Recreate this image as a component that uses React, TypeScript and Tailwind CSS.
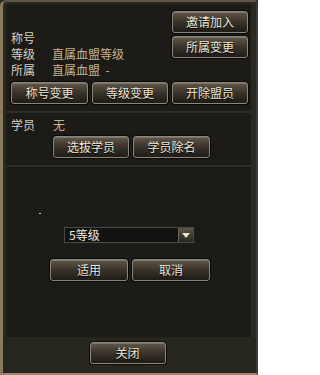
import type { ReactNode } from 'react';

// Game-style dark button with bevelled gradient
function Btn({ children, className = '' }: { children: ReactNode; className?: string }) {
  return (
    <button
      className={`h-[22px] rounded-[3px] border border-[#8a857a] bg-linear-to-b from-[#62574a] via-[#3a3329] to-[#1f1b15] text-[12px] leading-none text-[#eee8da] [text-shadow:0_1px_1px_#000] shadow-[inset_0_1px_0_rgba(255,255,255,0.18),0_0_0_1px_#0b0a08] flex items-center justify-center ${className}`}
    >
      {children}
    </button>
  );
}

export default function App() {
  return (
    <div className="w-[258px] h-[375px] overflow-hidden bg-[#2a2922] font-['Noto_Sans_CJK_SC','Liberation_Sans',sans-serif]">
      <div className="h-full flex flex-col border-l-[3px] border-t-2 border-b-2 border-r-2 border-l-[#8c7b5c] border-t-[#5f5747] border-b-[#9a8a6a] border-r-[#3c3a32] rounded-tl-[6px] rounded-tr-[4px]">
        {/* main dark panel */}
        <div className="ml-[3px] mr-[5px] mt-[2px] h-[333px] flex flex-col bg-[#1c1b18] rounded-tl-[4px]">
          {/* member info section */}
          <div className="h-[107px] pt-[7px] pl-[5px] pr-[3px]">
            <div className="flex">
              <div className="flex-1 pt-[19px] text-[12px] leading-[16px] text-[#d6d2c8]">
                <div>称号</div>
                <div className="flex">
                  <span className="w-[41px]">等级</span>
                  <span className="text-[#c9b18b]">直属血盟等级</span>
                </div>
                <div className="flex">
                  <span className="w-[41px]">所属</span>
                  <span className="text-[#c9b18b]">直属血盟&nbsp;&nbsp;-</span>
                </div>
              </div>
              <div className="flex flex-col gap-[3px]">
                <Btn className="w-[76px]">邀请加入</Btn>
                <Btn className="w-[76px]">所属变更</Btn>
              </div>
            </div>
            <div className="mt-[4px] flex gap-[4px]">
              <Btn className="w-[77px]">称号变更</Btn>
              <Btn className="w-[76px]">等级变更</Btn>
              <Btn className="w-[76px]">开除盟员</Btn>
            </div>
          </div>
          <div className="h-[2px] bg-[#2f2d26]" />

          {/* trainee section */}
          <div className="h-[52px] pt-[4px] pl-[5px]">
            <div className="flex text-[12px] leading-[16px]">
              <span className="w-[42px] text-[#d6d2c8]">学员</span>
              <span className="text-[#c9b18b]">无</span>
            </div>
            <div className="mt-[3px] ml-[42px] flex gap-[4px]">
              <Btn className="w-[76px]">选拔学员</Btn>
              <Btn className="w-[77px]">学员除名</Btn>
            </div>
          </div>
          <div className="h-[2px] bg-[#2c2a24]" />

          {/* level setting section */}
          <div className="flex-1 bg-[#1b1b18]">
            <div className="pt-[46px] pl-[33px] h-[60px]">
              <div className="w-[2px] h-[1px] bg-[#d6d2c8]" />
            </div>
            <div className="ml-[58px] w-[130px] h-[16px] flex border border-[#4b4a46] bg-[#121211]">
              <span className="flex-1 pl-[4px] text-[12px] leading-[14px] text-[#eeeae0]">5等级</span>
              <span className="w-[15px] h-full bg-linear-to-b from-[#5d5446] to-[#2a251d] border-l border-[#6b665c] flex items-center justify-center">
                <svg width="8" height="5" viewBox="0 0 8 5">
                  <path d="M0 0 H8 L4 5 Z" fill="#e8e2d2" />
                </svg>
              </span>
            </div>
            <div className="mt-[16px] ml-[44px] flex gap-[4px]">
              <Btn className="w-[78px]">适用</Btn>
              <Btn className="w-[78px]">取消</Btn>
            </div>
          </div>
        </div>

        {/* footer */}
        <div className="flex-1 bg-[#27261f] flex justify-center pt-[5px] pr-[4px]">
          <Btn className="w-[76px]">关闭</Btn>
        </div>
      </div>
    </div>
  );
}
